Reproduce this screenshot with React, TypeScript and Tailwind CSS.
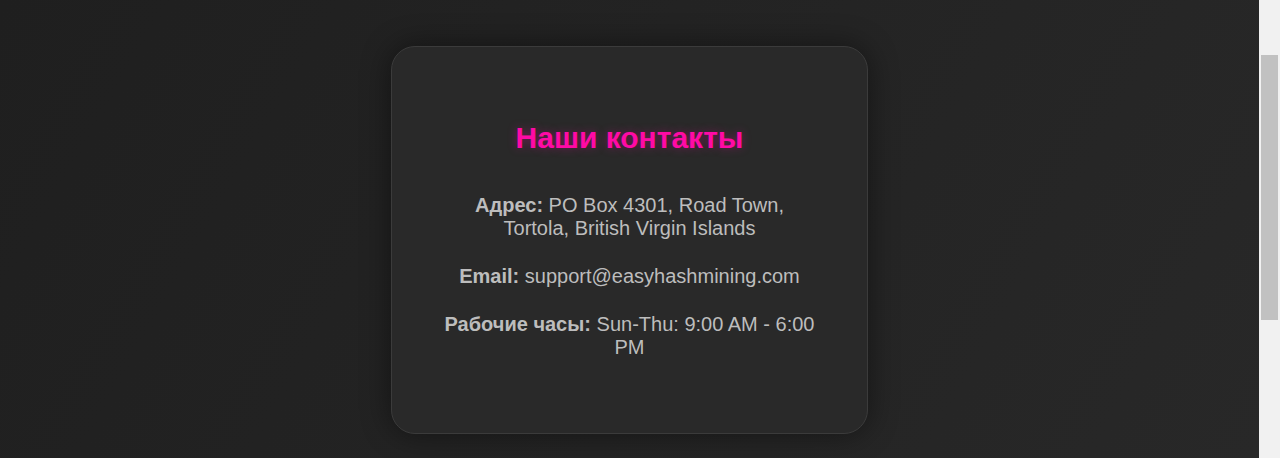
/**
 * Contacts card
 * Dark page with a single centred card of contact details
 */

const contacts = [
  { label: 'Адрес:', value: 'PO Box 4301, Road Town, Tortola, British Virgin Islands' },
  { label: 'Email:', value: 'support@easyhashmining.com' },
  { label: 'Рабочие часы:', value: 'Sun-Thu: 9:00 AM - 6:00 PM' },
];

export default function App() {
  return (
    <div className="flex h-[458px] w-full overflow-hidden font-['Liberation_Sans',Arial,sans-serif]">
      <main className="flex flex-1 justify-center bg-[linear-gradient(120deg,#1f1f1f_0%,#232323_45%,#282828_100%)] pt-[46px]">
        <section className="h-[388px] w-[477px] rounded-[24px] border border-[#3b3b3b] bg-[#292929] px-12 pt-[74px] text-center shadow-[0_0_30px_rgba(0,0,0,0.45)]">
          <h2 className="mb-[39px] text-[30px] font-bold leading-[34px] text-[#ff0aa5] [text-shadow:0_0_10px_rgba(255,10,165,0.35)]">
            Наши контакты
          </h2>
          <div className="flex flex-col gap-[25px] text-[20px] leading-[23px] text-[#bdbdbd]">
            {contacts.map((c) => (
              <p key={c.label}>
                <strong className="font-bold">{c.label}</strong> {c.value}
              </p>
            ))}
          </div>
        </section>
      </main>
      <aside className="w-[21px] bg-[#f1f1f1] px-[2px] pt-[55px]">
        <div className="h-[265px] bg-[#c1c1c1]"></div>
      </aside>
    </div>
  );
}
